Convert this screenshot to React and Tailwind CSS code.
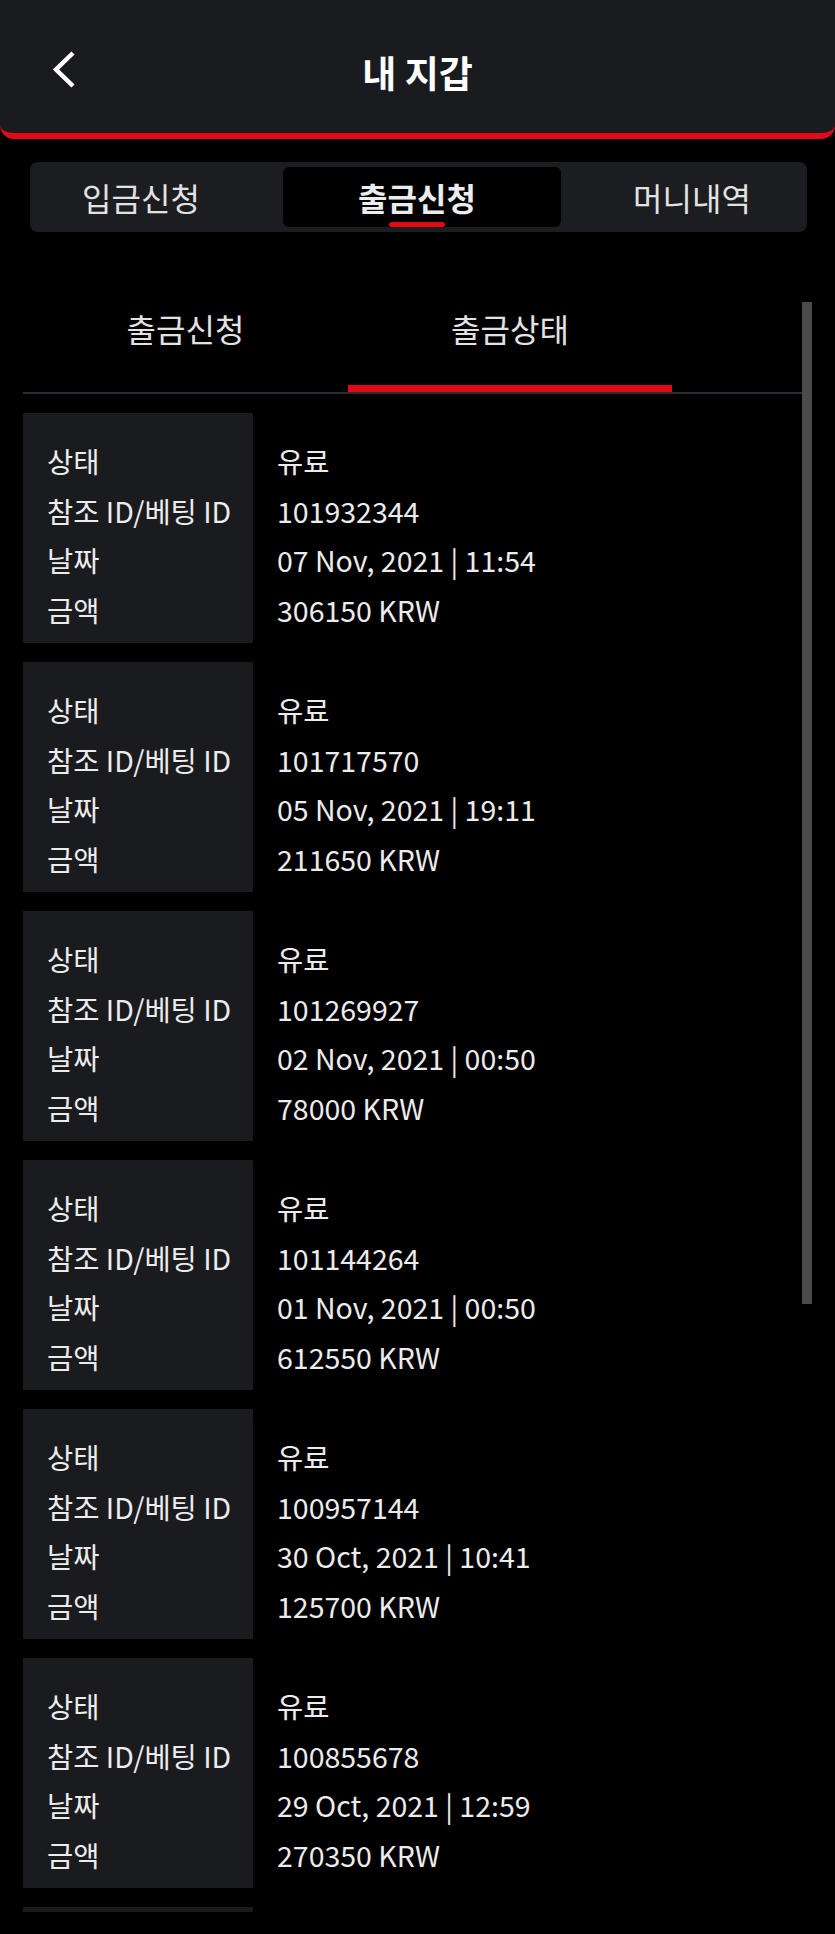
import React from 'react';

const rows = [
  { id: '101932344', date: '07 Nov, 2021 | 11:54', amount: '306150 KRW' },
  { id: '101717570', date: '05 Nov, 2021 | 19:11', amount: '211650 KRW' },
  { id: '101269927', date: '02 Nov, 2021 | 00:50', amount: '78000 KRW' },
  { id: '101144264', date: '01 Nov, 2021 | 00:50', amount: '612550 KRW' },
  { id: '100957144', date: '30 Oct, 2021 | 10:41', amount: '125700 KRW' },
  { id: '100855678', date: '29 Oct, 2021 | 12:59', amount: '270350 KRW' },
];

function BackIcon() {
  return (
    <svg width="24" height="37" viewBox="0 0 24 37" fill="none">
      <polyline points="21,2 4,18.5 21,35" stroke="#ffffff" strokeWidth="4.5" strokeLinejoin="miter" />
    </svg>
  );
}

function Card({ item }) {
  return (
    <div className="flex text-[28.5px] leading-[49.5px] text-[#ececec] whitespace-nowrap">
      <div className="w-[230px] shrink-0 bg-[#1a1b1f] pl-[24px] pt-[23px] pb-[9px]">
        <div>상태</div>
        <div>참조 ID/베팅 ID</div>
        <div>날짜</div>
        <div>금액</div>
      </div>
      <div className="pl-[24px] pt-[23px] pb-[9px]">
        <div>유료</div>
        <div>{item.id}</div>
        <div>{item.date}</div>
        <div>{item.amount}</div>
      </div>
    </div>
  );
}

export default function App() {
  return (
    <div className="w-full h-[1934px] overflow-hidden bg-black font-['Noto_Sans_CJK_KR','Noto_Sans',sans-serif]">
      <header className="relative h-[139px] bg-[#1a1b1f] border-b-[6px] border-[#e30a17] rounded-b-[14px] flex items-center justify-center pt-[12px]">
        <div className="absolute left-[52px] top-[51px]">
          <BackIcon />
        </div>
        <h1 className="text-[37px] font-bold text-white">내 지갑</h1>
      </header>

      <div className="mt-[23px] ml-[30px] mr-[28px] h-[70px] rounded-[8px] bg-[#1c1d21] p-[5px] flex text-[32px] text-[#e2e2e2]">
        <div className="w-[248px] flex items-center justify-center pr-[36px]">입금신청</div>
        <div className="relative w-[278px] bg-black rounded-[6px] flex items-center justify-center pr-[10px] font-bold text-[#ececec]">
          출금신청
          <span className="absolute left-[106px] bottom-0 w-[56px] h-[5px] rounded-full bg-[#e30a17]" />
        </div>
        <div className="flex-1 flex items-center justify-center pl-[21px]">머니내역</div>
      </div>

      <div className="relative mt-[70px] ml-[23px] w-[789px] h-[1610px] overflow-hidden">
        <div className="flex text-[32px] text-[#e2e2e2]">
          <div className="w-[325px] h-[90px] flex flex-col">
            <div className="h-[52px] flex items-center justify-center">출금신청</div>
          </div>
          <div className="w-[324px] h-[90px] flex flex-col">
            <div className="h-[52px] flex items-center justify-center">출금상태</div>
            <div className="flex-1" />
            <div className="h-[7px] bg-[#e30a17]" />
          </div>
        </div>
        <div className="h-[2px] bg-[#2a2d35]" />

        <div className="mt-[19px] flex flex-col gap-[19px]">
          {rows.map((item) => (
            <Card key={item.id} item={item} />
          ))}
          <div className="w-[230px] h-[40px] bg-[#1a1b1f]" />
        </div>

        <div className="absolute right-0 top-0 w-[10px] h-[1002px] bg-[#4b4b4b]" />
      </div>
    </div>
  );
}
